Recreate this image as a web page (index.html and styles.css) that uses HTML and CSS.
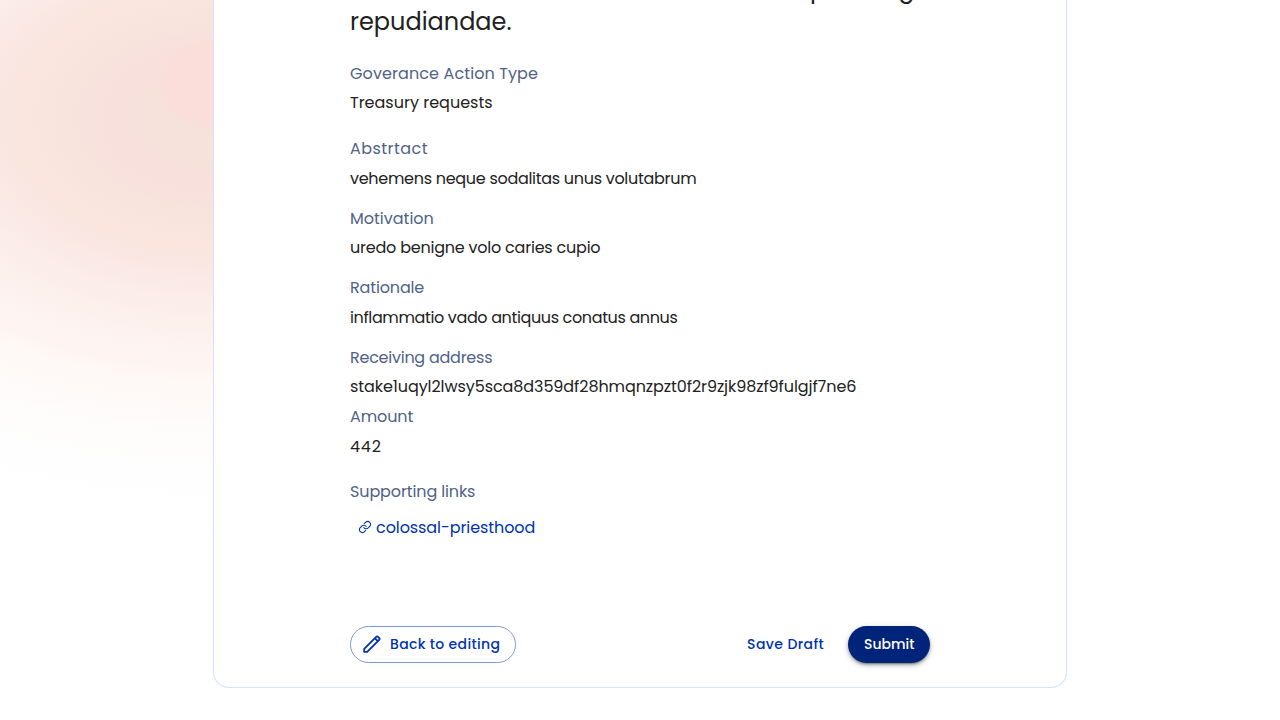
FILE: index.html
```html
<!DOCTYPE html>
<html lang="en">
<head>
<meta charset="utf-8">
<title>Review</title>
<link rel="stylesheet" href="styles.css">
</head>
<body>
<main class="page">
  <section class="card">
    <h1 class="title"><span class="title-line"><span>p</span><span>g</span></span><span>repudiandae.</span></h1>
    <dl class="details">
      <div class="field wide"><dt class="type-label">Goverance Action Type</dt><dd>Treasury requests</dd></div>
      <div class="field"><dt class="abstract-label">Abstrtact</dt><dd class="abstract">vehemens neque sodalitas unus volutabrum</dd></div>
      <div class="field"><dt>Motivation</dt><dd class="motivation">uredo benigne volo caries cupio</dd></div>
      <div class="field"><dt class="rationale-label">Rationale</dt><dd class="rationale">inflammatio vado antiquus conatus annus</dd></div>
      <div class="field tight"><dt class="address-label">Receiving address</dt><dd class="address">stake1uqyl2lwsy5sca8d359df28hmqnzpzt0f2r9zjk98zf9fulgjf7ne6</dd></div>
      <div class="field wide"><dt class="amount-label">Amount</dt><dd class="amount">442</dd></div>
      <div class="field links"><dt class="links-label">Supporting links</dt><dd><a class="link"><svg class="link-icon" viewBox="0 0 24 24"><path d="M10 13a5 5 0 0 0 7.500.5l3-3a5 5 0 0 0-7-7l-2.800 2.700M14 11a5 5 0 0 0-7.500-.5l-3 3a5 5 0 0 0 7 7l2.800-2.700"/></svg><span>colossal-priesthood</span></a></dd></div>
    </dl>
    <footer class="actions">
      <button class="button outlined"><svg class="pencil" viewBox="0 0 18 18"><path d="M1.200 16.800v-3L13.200 1.800a1.300 1.300 0 0 1 1.800 0l1.200 1.200a1.300 1.300 0 0 1 0 1.800L4.200 16.800zM11.800 3.200l3 3"/></svg><span>Back to editing</span></button>
      <button class="button save"><span>Save Draft</span></button>
      <button class="button contained"><span>Submit</span></button>
    </footer>
  </section>
</main>
</body>
</html>
```
FILE: styles.css
```css
* { box-sizing: border-box; }
body {
  margin: 0;
  font-family: Poppins, Inter, "Open Sans", sans-serif;
  font-size: 16px;
  line-height: 24px;
  color: #212121;
  background: #fff;
}
.page {
  height: 720px;
  overflow: hidden;
  background:
    radial-gradient(62px 48px at 218px 84px, #fbddd9 80%, rgba(251,221,217,0) 100%),
    radial-gradient(640px 425px at 213px 118px, #f7e1db 0%, #f7e1db 10%, #f8e0dc 17%, #f9e4dd 24%, #f9e6de 31%, #fae7e4 35%, #fbede9 43%, #fdf2ef 52%, #fef5f3 59%, #fef9f6 62%, #fefaf9 69%, #fefdfb 76%, #fefefe 83%, #fff 100%);
}
.card {
  display: flex;
  flex-direction: column;
  width: 854px;
  height: 688px;
  margin: 0 auto;
  padding: 0 136px 24px;
  border: 1px solid #d6e2ff;
  border-top: 0;
  border-radius: 0 0 16px 16px;
  background: #fff;
}
.title {
  margin: -26px 0 0;
  font-size: 24px;
  line-height: 32px;
  font-weight: 400;
}
.title-line {
  display: flex;
  gap: 72px;
  height: 31px;
  line-height: 30px;
  padding-left: 460px;
  margin-bottom: 1px;
}
.details { margin: 24px 0 0; }
.field { margin-bottom: 16.200px; }
.field.wide { margin-bottom: 21.800px; }
.field.tight { margin-bottom: 5.800px; }
dt { color: #506288; }
dd { margin: 5.400px 0 0; }
.type-label { letter-spacing: 0.1px; }
.abstract-label { letter-spacing: 0.45px; }
.abstract { letter-spacing: -0.29px; }
.motivation { letter-spacing: -0.22px; }
.rationale-label { letter-spacing: -0.15px; }
.rationale { letter-spacing: -0.365px; }
.address-label { letter-spacing: -0.25px; }
.address { letter-spacing: -0.08px; }
.amount-label { letter-spacing: -0.1px; }
.amount { letter-spacing: 0.8px; }
.links-label { letter-spacing: -0.12px; }
.links dd { margin-top: 12px; }
.link {
  display: flex;
  align-items: center;
  gap: 4px;
  padding-left: 8px;
  color: #0033ad;
  letter-spacing: -0.08px;
}
.link-icon {
  width: 14px;
  height: 14px;
  margin-top: -3px;
  fill: none;
  stroke: #0033ad;
  stroke-width: 1.800;
  stroke-linecap: round;
}
.actions {
  display: flex;
  align-items: center;
  margin-top: auto;
}
.button {
  display: flex;
  align-items: center;
  height: 37px;
  padding: 0 0 2px;
  border: 0;
  border-radius: 19px;
  background: none;
  color: #0033ad;
  font: 500 14px/24px Poppins, Inter, "Open Sans", sans-serif;
}
.outlined {
  width: 166px;
  padding-left: 12px;
  gap: 9px;
  border: 1px solid #7f99d6;
  letter-spacing: 0.34px;
}
.pencil {
  width: 18px;
  height: 18px;
  fill: none;
  stroke: #0033ad;
  stroke-width: 1.800;
  stroke-linejoin: round;
}
.save {
  width: 78px;
  margin-left: auto;
  letter-spacing: 0.42px;
}
.contained {
  width: 82px;
  margin-left: 23px;
  padding-left: 16px;
  color: #fff;
  background: #00247a;
  box-shadow: 0 3px 1px -2px rgba(0,0,0,.2), 0 2px 3px rgba(0,0,0,.24), 0 2px 6px rgba(0,0,0,.22);
}
```
